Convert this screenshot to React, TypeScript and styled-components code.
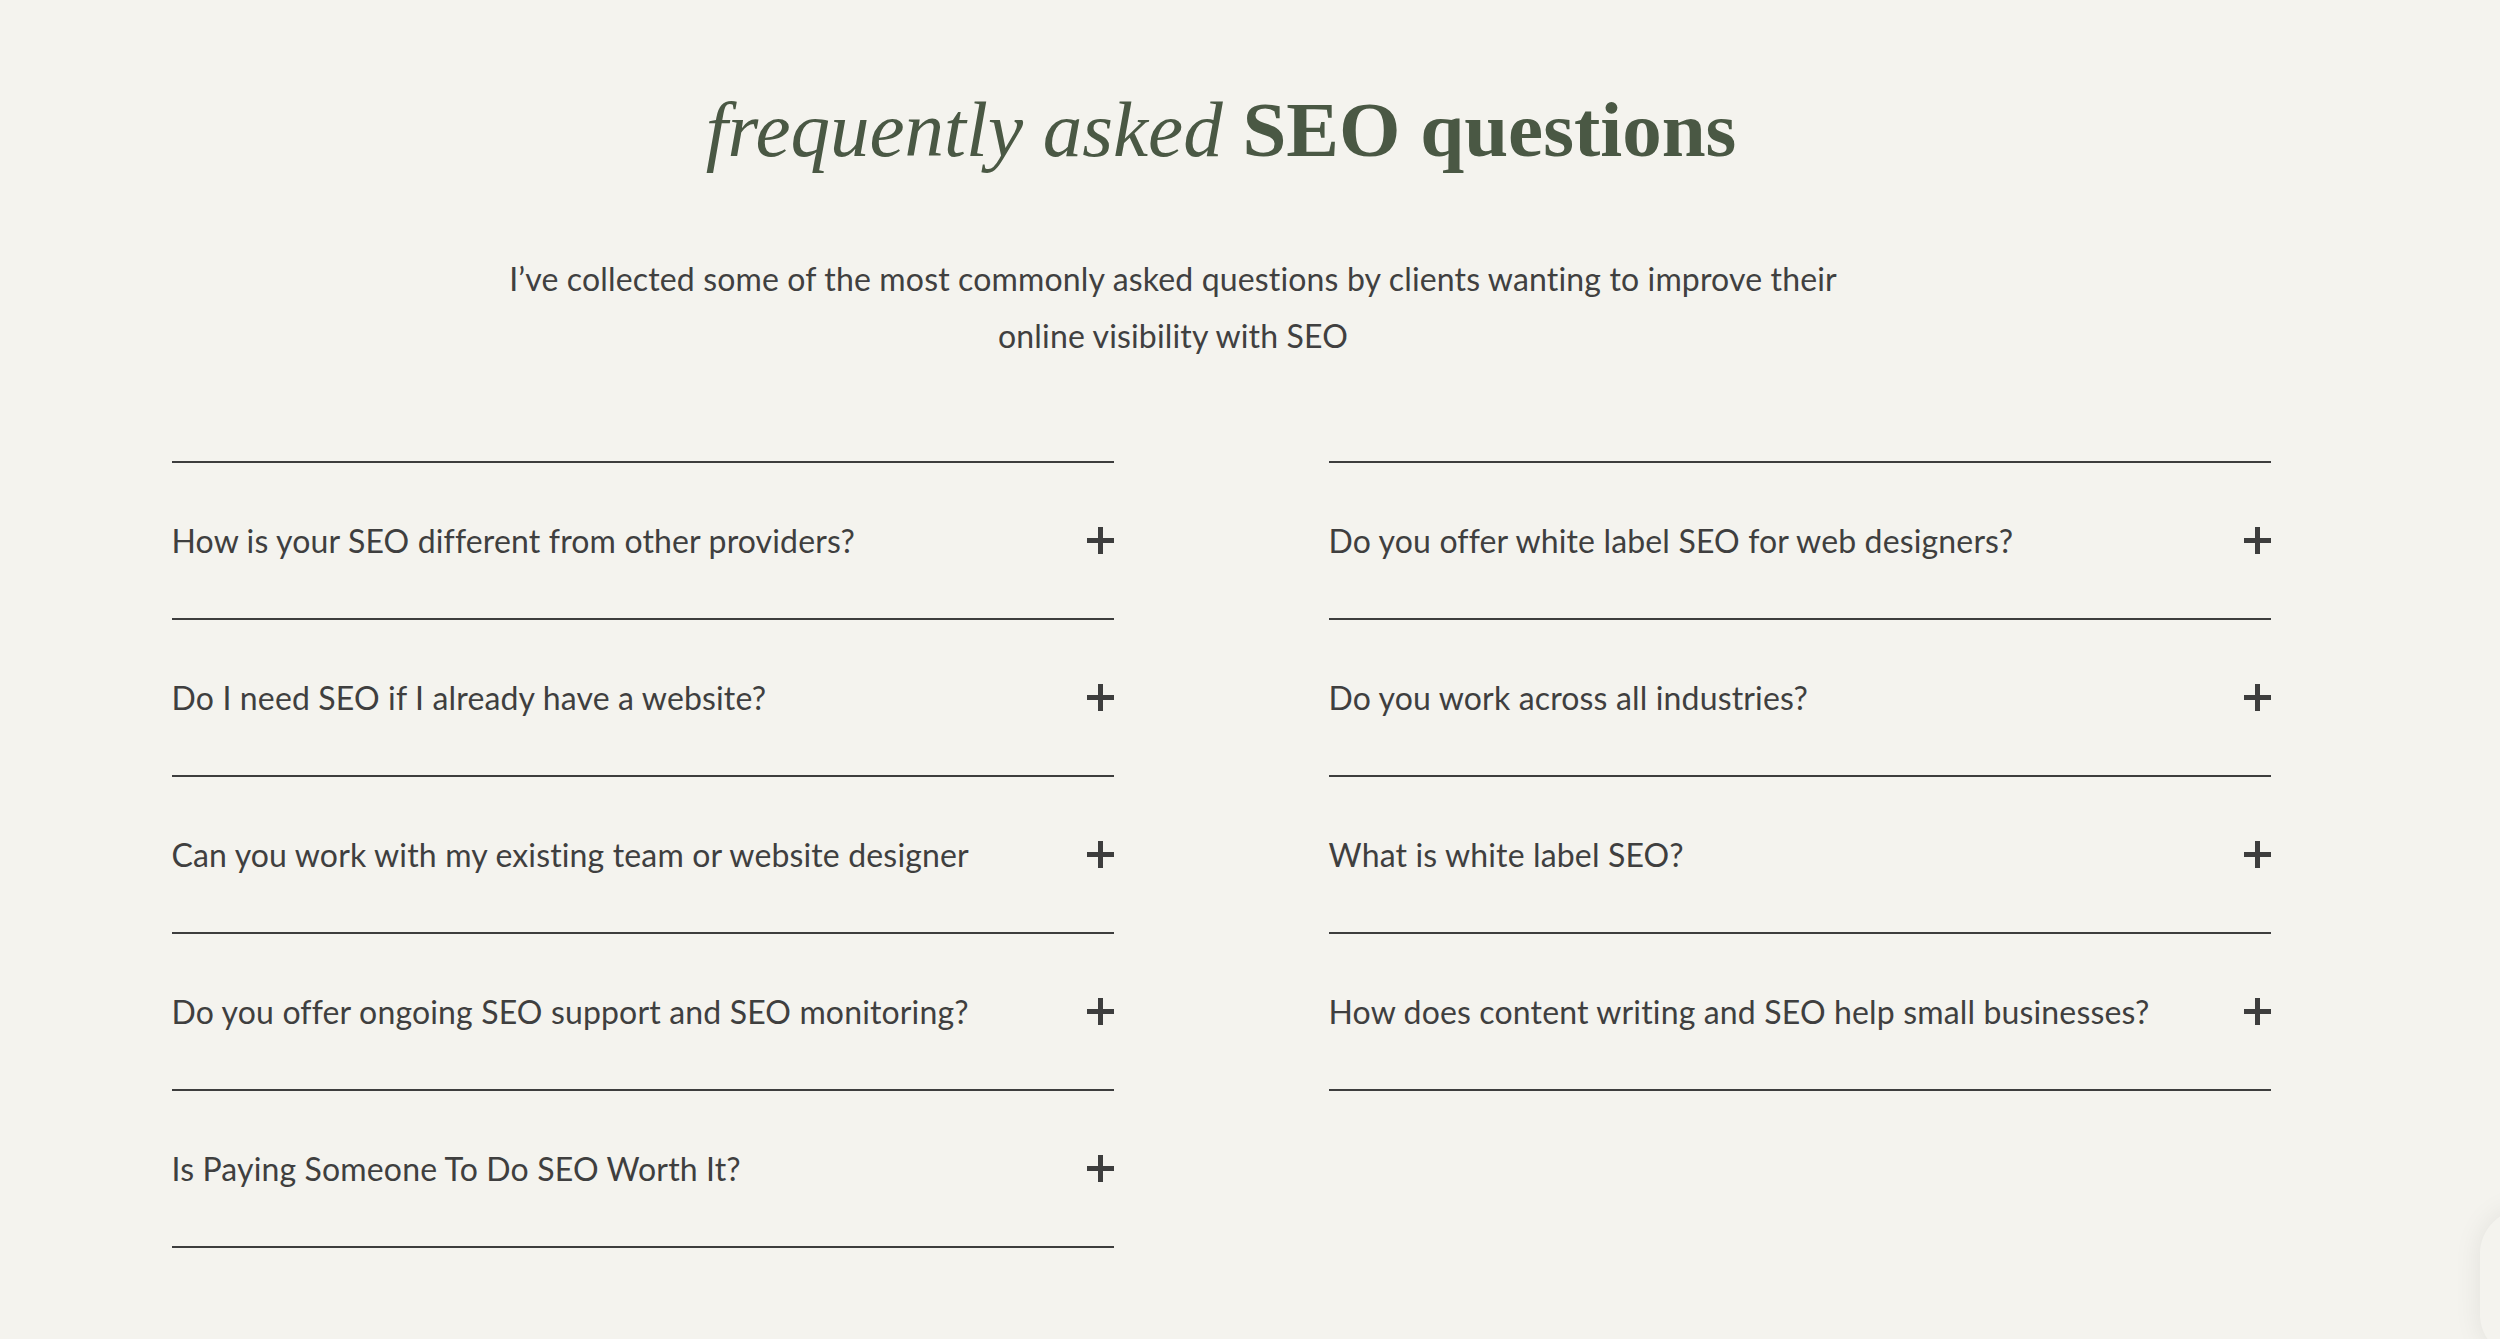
import styled, { createGlobalStyle } from 'styled-components';

const GlobalStyle = createGlobalStyle`
    html, body {
        margin: 0;
        padding: 0;
        background: #f4f3ee;
    }
    * {
        box-sizing: border-box;
    }
`;

const Section = styled.section`
    display: flex;
    flex-direction: column;
    align-items: center;
    padding: 83px 58px 0 0;
    min-height: 1339px;
`;

const Heading = styled.h2`
    margin: 0;
    font-family: 'Liberation Serif', 'Times New Roman', serif;
    font-size: 79px;
    line-height: 1.2;
    font-weight: 700;
    color: #4a5844;
    em {
        font-weight: 400;
    }
`;

const Intro = styled.p`
    margin: 72px 96px 0 0;
    max-width: 1360px;
    text-align: center;
    font-family: Lato, 'Noto Sans', sans-serif;
    font-size: 32px;
    letter-spacing: 0.15px;
    line-height: 57px;
    color: #404040;
`;

const Columns = styled.div`
    display: grid;
    grid-template-columns: 942px 942px;
    column-gap: 215px;
    align-items: start;
    margin-top: 97px;
`;

const List = styled.div`
    display: flex;
    flex-direction: column;
    border-bottom: 2px solid #3d3d3d;
`;

const Item = styled.div`
    display: flex;
    align-items: center;
    justify-content: space-between;
    height: 157px;
    border-top: 2px solid #3d3d3d;
    font-family: Lato, 'Noto Sans', sans-serif;
    font-size: 32px;
    letter-spacing: 0.15px;
    color: #3f3f3f;
    cursor: pointer;
`;

const Plus = styled.svg`
    flex: none;
    width: 27px;
    height: 27px;
`;

// chat launcher peeking in at the bottom-right corner
const Launcher = styled.div`
    position: fixed;
    right: -70px;
    bottom: -20px;
    width: 90px;
    height: 150px;
    border-radius: 45px;
    background: #f4f3ee;
    box-shadow: 0 0 28px rgba(0, 0, 0, 0.08);
`;

const PlusIcon = () => (
    <Plus viewBox="0 0 27 27">
        <rect x="11" y="0" width="5" height="27" fill="#3d3d3d" />
        <rect x="0" y="11" width="27" height="5" fill="#3d3d3d" />
    </Plus>
);

const left = [
    'How is your SEO different from other providers?',
    'Do I need SEO if I already have a website?',
    'Can you work with my existing team or website designer',
    'Do you offer ongoing SEO support and SEO monitoring?',
    'Is Paying Someone To Do SEO Worth It?',
];

const right = [
    'Do you offer white label SEO for web designers?',
    'Do you work across all industries?',
    'What is white label SEO?',
    'How does content writing and SEO help small businesses?',
];

const FaqList = ({ items }: { items: string[] }) => (
    <List>
        {items.map((q) => (
            <Item key={q}>
                <span>{q}</span>
                <PlusIcon />
            </Item>
        ))}
    </List>
);

export default function App() {
    return (
        <>
            <GlobalStyle />
            <Section>
                <Heading>
                    <em>frequently asked</em> SEO questions
                </Heading>
                <Intro>
                    I’ve collected some of the most commonly asked questions by clients wanting to improve their
                    online visibility with SEO
                </Intro>
                <Columns>
                    <FaqList items={left} />
                    <FaqList items={right} />
                </Columns>
            </Section>
            <Launcher />
        </>
    );
}
